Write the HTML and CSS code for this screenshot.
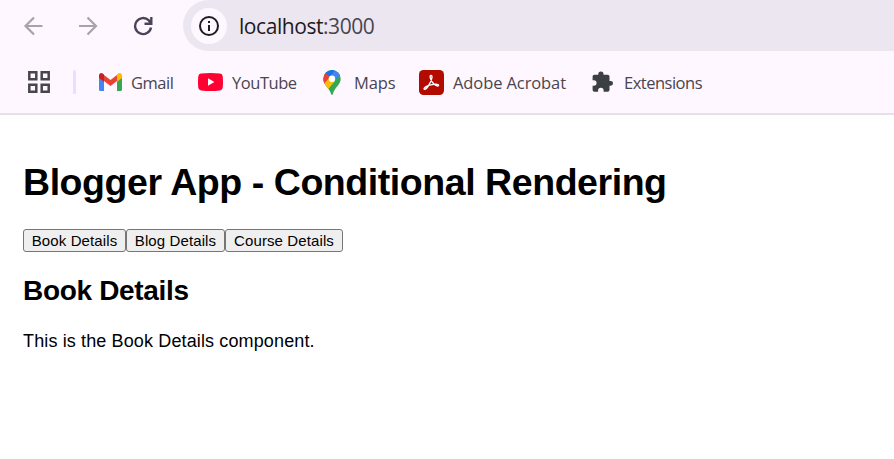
FILE: index.html
```html
<!DOCTYPE html>
<html lang="en">
<head>
<meta charset="utf-8">
<title>Blogger App</title>
<link rel="stylesheet" href="styles.css">
</head>
<body>
<header class="browser">
  <div class="toolbar">
    <svg class="nav back" width="20" height="20" viewBox="0 0 20 20"><path d="M19.500 10H2.500M11 1.500L2.500 10l8.500 8.500"/></svg>
    <svg class="nav forward" width="20" height="20" viewBox="0 0 20 20"><path d="M1 10h17M9.500 1.500L18 10l-8.500 8.500"/></svg>
    <svg class="nav reload" width="20" height="20" viewBox="0 0 20 20"><path d="M18 11.500A8 8 0 1 1 15.800 4.400L18 7M18.300 1v6.700h-6.800"/></svg>
    <div class="address">
      <span class="info"><svg width="22" height="22" viewBox="0 0 22 22"><circle cx="11" cy="11" r="9" fill="none" stroke="#1d1b20" stroke-width="2"/><path d="M10 10h2v6h-2zM10 6h2v2h-2z" fill="#1d1b20"/></svg></span>
      <span class="url">localhost<span class="port">:3000</span></span>
    </div>
  </div>
  <nav class="bookmarks">
    <svg class="apps" width="22" height="22" viewBox="0 0 22 22"><path d="M1.300 1.300h7v7h-7zM13.700 1.300h7v7h-7zM1.300 13.700h7v7h-7zM13.700 13.700h7v7h-7z" fill="none" stroke="#49454e" stroke-width="2.500"/></svg>
    <span class="divider"></span>
    <a class="mark gmail"><svg width="23" height="18" viewBox="0 0 23 18"><path d="M0 4l5 3.800V18H1.600Q0 18 0 16.400z" fill="#4285f4"/><path d="M23 4l-5 3.800V18h3.400q1.600 0 1.600-1.600z" fill="#34a853"/><path d="M5 2l6.500 4.900L18 2v6l-6.500 5L5 8z" fill="#ea4335"/><path d="M0 5V2.500C0 .2 2.400-.6 4 .7L5 1.500V8.700z" fill="#c5221f"/><path d="M23 5V2.500C23 .2 20.600-.6 19 .7l-1 .8v7.200z" fill="#fbbc04"/></svg><span>Gmail</span></a>
    <a class="mark youtube"><svg width="25" height="18" viewBox="0 0 25 18"><path d="M3 .6Q12.500-.6 22 .6 24.400.9 24.700 3.200q.6 5.800 0 11.600-.3 2.300-2.700 2.600-9.500 1.200-19 0Q.6 17.100.3 14.800-.3 9 .3 3.200.6.900 3 .6z" fill="#f03"/><path d="M10 5.300L16.400 9 10 12.700z" fill="#fff"/></svg><span>YouTube</span></a>
    <a class="mark maps"><svg width="18" height="25" viewBox="0 0 18 25"><clipPath id="pin"><path d="M9 0a8.700 8.700 0 0 1 8.700 8.700c0 6.300-6.200 8.200-7.900 15.500q-.8 1.600-1.600 0C6.800 18.200.3 15.600.3 8.700A8.700 8.700 0 0 1 9 0z"/></clipPath><g clip-path="url(#pin)"><path d="M0 0h18v25H0z" fill="#34a853"/><path d="M0 2L3 0h10L6.700 7z" fill="#1a73e8"/><path d="M0 1.500L2.300 3 7 7 1 14H0z" fill="#ea4335"/><path d="M6.700 6.700L12.500 0H18v4L11.300 11z" fill="#4285f4"/><path d="M1 14L7 7l5 4-7.500 9z" fill="#fbbc04"/></g><circle cx="9" cy="8.800" r="3.200" fill="#fff"/></svg><span>Maps</span></a>
    <a class="mark adobe"><svg width="25" height="25" viewBox="0 0 25 25"><rect width="25" height="25" rx="4.500" fill="#b30b00"/><path d="M12 5.300c-1.800 0-.7 5.200 2.900 8.700 2 2 4.700 2.600 4.700 1.200 0-1.700-8.700-.9-12.600 1.400-2.500 1.500-2.300 3-1 2.700 2.500-.6 6.500-8.500 6.900-11.500.2-1.700 0-2.500-.9-2.500z" fill="none" stroke="#fff" stroke-width="1.350"/></svg><span>Adobe Acrobat</span></a>
    <a class="mark extensions"><svg width="22" height="22" viewBox="0 0 22 22"><path d="M18.700 10H17.500V5.600q0-1.900-1.900-1.900H11.500V3a2.600 2.600 0 0 0-5.200 0v.7H2.400Q.6 3.700.6 5.600v3.600h1.200a2.700 2.700 0 0 1 0 5.500H.6v4.200q0 1.800 1.800 1.800h3.700v-1.100a2.700 2.700 0 0 1 5.500 0v1.100h4q1.900 0 1.900-1.800v-4.200h1.200a2.350 2.350 0 0 0 0-4.700z" fill="#3c4043"/></svg><span>Extensions</span></a>
  </nav>
</header>
<main class="page">
  <h1>Blogger App - Conditional Rendering</h1>
  <div class="buttons"><button>Book Details</button><button>Blog Details</button><button>Course Details</button></div>
  <h2>Book Details</h2>
  <p>This is the Book Details component.</p>
</main>
</body>
</html>
```
FILE: styles.css
```css
* { box-sizing: border-box; }
body { margin: 0; background: #fff; color: #000; font-family: "Liberation Sans", Arial, sans-serif; overflow: hidden; }
svg { display: block; flex: none; }
.browser { height: 115px; background: #fef7ff; border-bottom: 2px solid #e6e0e9; font-family: "Open Sans", "Noto Sans", sans-serif; }
.toolbar { display: flex; height: 51px; padding-left: 23px; }
.nav { margin-top: 16px; fill: none; stroke: #a8a2aa; stroke-width: 2.2; }
.forward { margin-left: 35px; }
.reload { margin-left: 35px; stroke: #4a4458; stroke-width: 2.4; }
.address { display: flex; align-items: center; flex: 1; height: 51px; margin-left: 30px; padding-left: 8px; background: #ece6f0; border-radius: 26px 0 0 26px; }
.info { display: flex; align-items: center; justify-content: center; width: 36px; height: 36px; margin-top: 1px; border-radius: 50%; background: #fef7ff; }
.url { margin-left: 12px; margin-top: 1px; font-size: 21px; letter-spacing: -0.44px; color: #1d1b20; white-space: nowrap; }
.port { color: #49454e; }
.bookmarks { display: flex; align-items: center; height: 62px; padding-left: 28px; font-size: 16.5px; color: #49454e; }
.divider { width: 3px; height: 24px; margin: 0 23px 0 23px; border-radius: 2px; background: #eaddff; }
.mark { display: flex; align-items: center; white-space: nowrap; height: 26px; }
.mark span { margin-left: 9px; padding-top: 1px; }
.gmail { width: 99px; letter-spacing: -0.45px; }
.youtube { width: 125px; letter-spacing: -0.45px; }
.maps { width: 96px; letter-spacing: -0.1px; }
.maps span { margin-left: 13px; }
.adobe { width: 173px; letter-spacing: -0.1px; }
.extensions { letter-spacing: -0.5px; }
.extensions span { margin-left: 10px; }
.page { padding: 44px 23px 0; }
h1 { margin: 0; font-size: 37.5px; line-height: 46px; letter-spacing: -0.44px; white-space: nowrap; }
.buttons { display: flex; margin-top: 24px; }
button { height: 23px; padding: 0; border: 1px solid #767676; border-radius: 3px; background: #efefef; color: #000; font: 15px/21px "Liberation Sans", Arial, sans-serif; letter-spacing: 0.11px; width: 103px; }
button:nth-child(2) { width: 99px; }
button:nth-child(3) { width: 118px; }
h2 { margin: 22px 0 0; font-size: 28px; line-height: 34px; letter-spacing: -0.33px; }
p { margin: 22px 0 0; font-size: 18px; line-height: 22px; letter-spacing: 0.13px; }
```
